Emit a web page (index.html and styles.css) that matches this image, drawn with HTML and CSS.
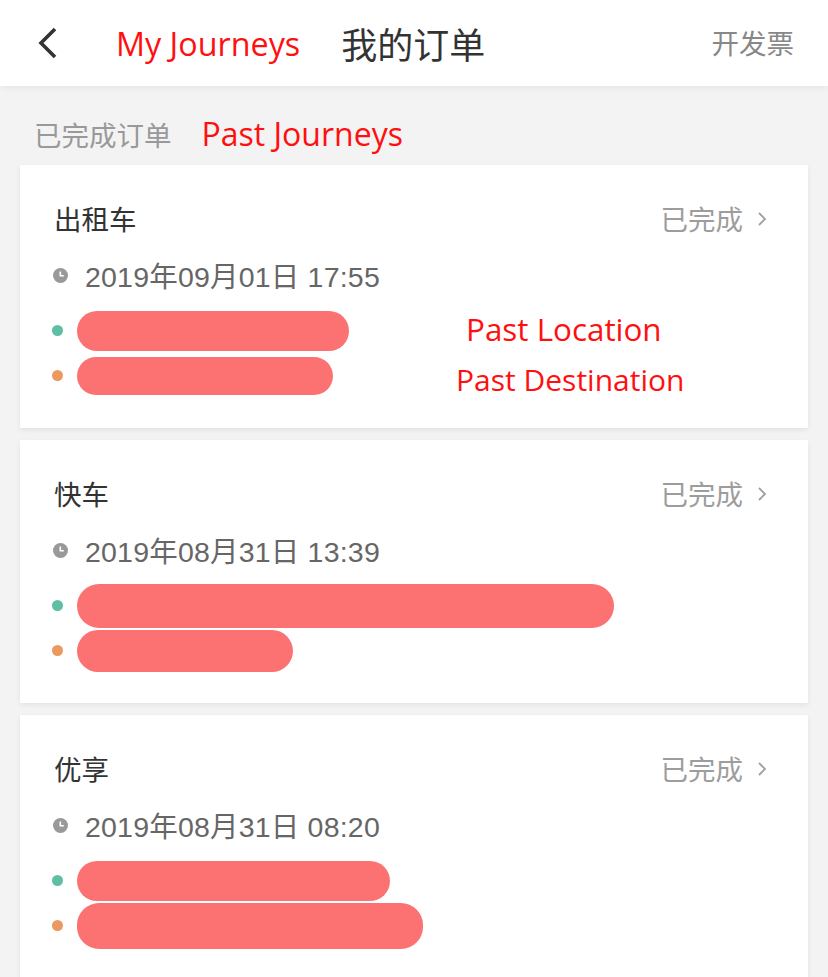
FILE: index.html
```html
<!DOCTYPE html>
<html lang="zh">
<head>
<meta charset="utf-8">
<title>我的订单</title>
<link rel="stylesheet" href="styles.css">
</head>
<body>
<header class="topbar">
  <div class="back">
    <svg width="20" height="32" viewBox="0 0 20 32"><polyline points="17,2 3,16 17,30" fill="none" stroke="#333" stroke-width="3.6" stroke-linejoin="miter"/></svg>
  </div>
  <span class="note note-title">My Journeys</span>
  <h1 class="title">我的订单</h1>
  <span class="invoice">开发票</span>
</header>

<div class="section-label">
  <span class="label-cn">已完成订单</span>
  <span class="note note-past">Past Journeys</span>
</div>

<main class="list">
  <section class="card">
    <div class="card-head">
      <span class="kind">出租车</span>
      <span class="status">已完成<svg class="chev" width="10" height="16" viewBox="0 0 10 16"><polyline points="2,2 8,8 2,14" fill="none" stroke="#a0a0a0" stroke-width="1.8"/></svg></span>
    </div>
    <div class="time">
      <svg class="clock" width="15" height="15" viewBox="0 0 15 15"><circle cx="7.5" cy="7.5" r="7.5" fill="#999"/><polyline points="7.3,3.4 7.3,7.8 10.8,7.8" fill="none" stroke="#fff" stroke-width="1.6"/></svg>
      <span>2019年09月01日 17:55</span>
    </div>
    <div class="addr"><span class="dot from"></span><span class="redact" style="width:272px;height:40px"></span></div>
    <div class="addr"><span class="dot to"></span><span class="redact" style="width:256px;height:38px"></span></div>
    <span class="note note-loc">Past Location</span>
    <span class="note note-dest">Past Destination</span>
  </section>

  <section class="card">
    <div class="card-head">
      <span class="kind">快车</span>
      <span class="status">已完成<svg class="chev" width="10" height="16" viewBox="0 0 10 16"><polyline points="2,2 8,8 2,14" fill="none" stroke="#a0a0a0" stroke-width="1.8"/></svg></span>
    </div>
    <div class="time">
      <svg class="clock" width="15" height="15" viewBox="0 0 15 15"><circle cx="7.5" cy="7.5" r="7.5" fill="#999"/><polyline points="7.3,3.4 7.3,7.8 10.8,7.8" fill="none" stroke="#fff" stroke-width="1.6"/></svg>
      <span>2019年08月31日 13:39</span>
    </div>
    <div class="addr"><span class="dot from"></span><span class="redact" style="width:537px;height:44px"></span></div>
    <div class="addr"><span class="dot to"></span><span class="redact" style="width:216px;height:42px"></span></div>
  </section>

  <section class="card">
    <div class="card-head">
      <span class="kind">优享</span>
      <span class="status">已完成<svg class="chev" width="10" height="16" viewBox="0 0 10 16"><polyline points="2,2 8,8 2,14" fill="none" stroke="#a0a0a0" stroke-width="1.8"/></svg></span>
    </div>
    <div class="time">
      <svg class="clock" width="15" height="15" viewBox="0 0 15 15"><circle cx="7.5" cy="7.5" r="7.5" fill="#999"/><polyline points="7.3,3.4 7.3,7.8 10.8,7.8" fill="none" stroke="#fff" stroke-width="1.6"/></svg>
      <span>2019年08月31日 08:20</span>
    </div>
    <div class="addr"><span class="dot from"></span><span class="redact" style="width:313px;height:40px"></span></div>
    <div class="addr"><span class="dot to"></span><span class="redact" style="width:346px;height:46px"></span></div>
  </section>
</main>
</body>
</html>
```

FILE: styles.css
```css
* { box-sizing: border-box; }
html, body { margin: 0; padding: 0; }
body {
  background: #f3f3f3;
  font-family: "Noto Sans CJK SC", "Noto Sans", sans-serif;
  width: 828px;
  height: 977px;
  overflow: hidden;
}
.topbar {
  height: 86px;
  background: #fff;
  display: flex;
  align-items: center;
  padding: 0 34px 0 38px;
  box-shadow: 0 2px 6px rgba(0,0,0,0.06);
  position: relative;
  z-index: 1;
}
.back { width: 20px; height: 32px; display: flex; }
.note {
  font-family: "Open Sans", "Noto Sans", sans-serif;
  color: #ff1010;
  font-size: 31px;
  line-height: 1;
  white-space: nowrap;
}
.note-title { margin-left: 58px; font-size: 32.3px; }
.title {
  margin: 0 0 0 41px;
  font-weight: 400;
  font-size: 36px;
  color: #333;
  line-height: 1;
}
.invoice {
  margin-left: auto;
  font-size: 27.5px;
  color: #888;
  line-height: 1;
}
.section-label {
  height: 79px;
  display: flex;
  align-items: baseline;
  padding: 30px 0 0 34px;
}
.label-cn { font-size: 27.5px; color: #999; line-height: 36px; }
.note-past { margin-left: 30px; font-size: 32px; }
.list {
  padding: 0 20px;
  display: flex;
  flex-direction: column;
  gap: 12px;
}
.card {
  position: relative;
  background: #fff;
  height: 263px;
  padding: 35px 40px 0 33px;
  box-shadow: 0 2px 5px rgba(0,0,0,0.07);
}
.card-head {
  height: 36px;
  display: flex;
  align-items: center;
  justify-content: space-between;
}
.kind { font-size: 27.5px; color: #333; line-height: 36px; margin-left: 1px; }
.status {
  font-size: 27.5px;
  color: #9d9d9d;
  line-height: 36px;
  display: flex;
  align-items: center;
  margin-right: 1px;
}
.chev { margin-left: 14px; margin-top: 2px; }
.time {
  margin-top: 20px;
  height: 36px;
  display: flex;
  align-items: center;
  font-family: "Liberation Sans", "Noto Sans CJK SC", sans-serif;
  font-size: 28.5px;
  letter-spacing: 0.2px;
  color: #666;
}
.clock { margin-right: 17px; margin-top: 2px; }
.addr {
  height: 45px;
  display: flex;
  align-items: center;
}
.time + .addr { margin-top: 16px; }
.dot {
  width: 11px;
  height: 11px;
  border-radius: 50%;
  flex: none;
  margin-left: -1px;
}
.dot.from { background: #5ebfa4; }
.dot.to { background: #eb995e; }
.redact {
  margin-left: 14px;
  background: #fc7272;
  border-radius: 22px;
  flex: none;
}
.note-loc { position: absolute; left: 446px; top: 148px; font-size: 31.4px; }
.note-dest { position: absolute; left: 436px; top: 200px; font-size: 30px; }
```
